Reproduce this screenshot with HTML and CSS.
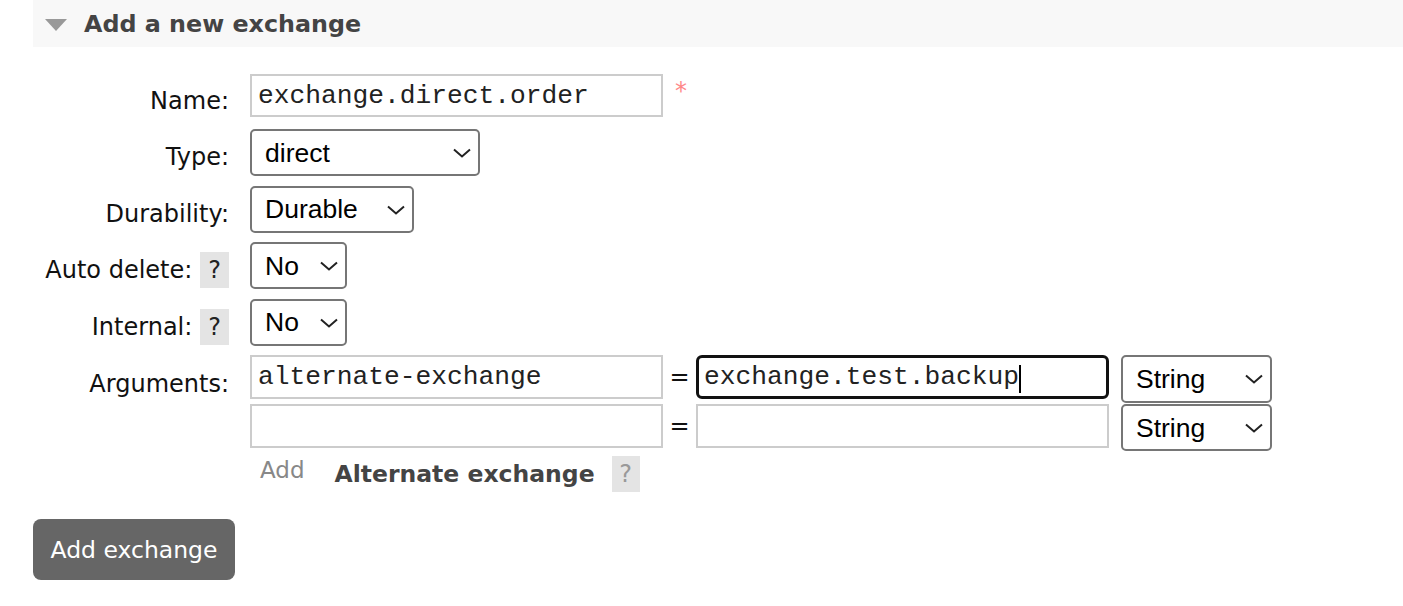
FILE: index.html
```html
<!DOCTYPE html>
<html>
<head>
<meta charset="utf-8">
<link rel="stylesheet" href="styles.css">
</head>
<body>
<div class="page">
  <h2 class="section-head"><span class="tri"></span>Add a new exchange</h2>
  <div class="form">
    <div class="row row-name">
      <div class="label">Name:</div>
      <div class="field">
        <input class="text" type="text" value="exchange.direct.order">
        <span class="mand">*</span>
      </div>
    </div>
    <div class="row">
      <div class="label">Type:</div>
      <div class="field">
        <span class="sel w-type"><select><option>direct</option></select><svg class="chev" viewBox="0 0 18 10"><path d="M1 1.5 L9 8.5 L17 1.5" fill="none" stroke="#222" stroke-width="2"/></svg></span>
      </div>
    </div>
    <div class="row">
      <div class="label">Durability:</div>
      <div class="field">
        <span class="sel w-dur"><select><option>Durable</option></select><svg class="chev" viewBox="0 0 18 10"><path d="M1 1.5 L9 8.5 L17 1.5" fill="none" stroke="#222" stroke-width="2"/></svg></span>
      </div>
    </div>
    <div class="row">
      <div class="label">Auto delete: <span class="help">?</span></div>
      <div class="field">
        <span class="sel w-no"><select><option>No</option></select><svg class="chev" viewBox="0 0 18 10"><path d="M1 1.5 L9 8.5 L17 1.5" fill="none" stroke="#222" stroke-width="2"/></svg></span>
      </div>
    </div>
    <div class="row">
      <div class="label">Internal: <span class="help">?</span></div>
      <div class="field">
        <span class="sel w-no"><select><option>No</option></select><svg class="chev" viewBox="0 0 18 10"><path d="M1 1.5 L9 8.5 L17 1.5" fill="none" stroke="#222" stroke-width="2"/></svg></span>
      </div>
    </div>
    <div class="row row-args">
      <div class="label">Arguments:</div>
      <div class="field args">
        <div class="arg">
          <input class="text" type="text" value="alternate-exchange">
          <span class="eq">=</span>
          <span class="focus-wrap"><input class="text focused" type="text" value="exchange.test.backup"><span class="caret"></span></span>
          <span class="sel w-str"><select><option>String</option></select><svg class="chev" viewBox="0 0 18 10"><path d="M1 1.5 L9 8.5 L17 1.5" fill="none" stroke="#222" stroke-width="2"/></svg></span>
        </div>
        <div class="arg">
          <input class="text" type="text" value="">
          <span class="eq">=</span>
          <input class="text" type="text" value="">
          <span class="sel w-str"><select><option>String</option></select><svg class="chev" viewBox="0 0 18 10"><path d="M1 1.5 L9 8.5 L17 1.5" fill="none" stroke="#222" stroke-width="2"/></svg></span>
        </div>
        <div class="add-row">
          <span class="add">Add</span>
          <span class="alt">Alternate exchange</span>
          <span class="help light">?</span>
        </div>
      </div>
    </div>
  </div>
  <button class="submit" type="button">Add exchange</button>
</div>
</body>
</html>
```

FILE: styles.css
```css
html, body {
  margin: 0;
  padding: 0;
  background: #fff;
}
body {
  font-family: "DejaVu Sans", Verdana, sans-serif;
  color: #111;
}
.page {
  padding-left: 33px;
}
.section-head {
  margin: 0;
  height: 47px;
  background: #f8f8f8;
  display: flex;
  align-items: center;
  font-size: 23.8px;
  font-weight: bold;
  color: #444;
  padding-left: 12px;
  box-sizing: border-box;
  padding-top: 1px;
}
.tri {
  width: 0;
  height: 0;
  border-left: 11px solid transparent;
  border-right: 11px solid transparent;
  border-top: 12px solid #999;
  margin-right: 17px;
  margin-top: 1px;
}
.form {
  display: flex;
  flex-direction: column;
  margin-top: 27px;
  gap: 9.5px;
}
.row-name {
  margin-bottom: 2.5px;
}
.row {
  display: flex;
  align-items: flex-start;
}
.label {
  width: 196px;
  flex: none;
  box-sizing: border-box;
  height: 46px;
  font-size: 24px;
  line-height: 30px;
  padding-top: 10px;
  display: flex;
  justify-content: flex-end;
  align-items: center;
  white-space: pre;
}
.row-name .label {
  height: 43px;
}
.row-args .label {
  padding-top: 12px;
}
.field {
  margin-left: 21px;
  display: flex;
  align-items: flex-start;
}
.text {
  box-sizing: border-box;
  width: 413px;
  height: 43px;
  border: 2px solid #ccc;
  border-radius: 0;
  padding: 0 6px;
  font-family: "Liberation Mono", "Courier New", monospace;
  font-size: 26.25px;
  color: #222;
  background: #fff;
  outline: none;
  margin: 0;
}
.args .text {
  height: 44px;
}
.mand {
  color: #f88;
  font-size: 24px;
  margin-left: 12px;
  line-height: 30px;
  margin-top: 2px;
}
.sel {
  position: relative;
  display: inline-block;
  flex: none;
}
.sel select {
  appearance: none;
  -webkit-appearance: none;
  box-sizing: border-box;
  height: 47px;
  width: 100%;
  border: 2px solid #767676;
  border-radius: 5px;
  background: #fff;
  font-family: "Liberation Sans", Arial, sans-serif;
  font-size: 26.5px;
  color: #000;
  padding: 0 0 0 13px;
  margin: 0;
  outline: none;
  display: block;
}
.chev {
  position: absolute;
  right: 9px;
  top: 19px;
  width: 18px;
  height: 10px;
  pointer-events: none;
}
.w-type { width: 230px; }
.w-dur { width: 164px; }
.w-no { width: 97px; }
.w-str { width: 151px; margin-left: 12px; }
.arg:first-child .w-str select { height: 48px; }
.help {
  display: inline-flex;
  align-items: center;
  justify-content: center;
  width: 29px;
  height: 36px;
  background: #e4e4e4;
  color: #222;
  font-size: 24px;
  line-height: 36px;
}
.args {
  flex-direction: column;
}
.arg {
  display: flex;
  align-items: flex-start;
}
.arg:first-child {
  margin-bottom: 1px;
}
.eq {
  width: 33px;
  text-align: center;
  font-size: 24px;
  line-height: 44px;
  color: #111;
}
.focus-wrap {
  position: relative;
  display: inline-block;
}
.text.focused {
  border: 3px solid #111;
  border-radius: 6px;
  padding-left: 5px;
}
.caret {
  position: absolute;
  left: 323px;
  top: 10px;
  width: 2px;
  height: 28px;
  background: #000;
}
.add-row {
  display: flex;
  align-items: center;
  height: 36px;
  margin-top: 5px;
}
.add {
  align-self: flex-start;
  color: #888;
  font-size: 23px;
  line-height: 28px;
  margin-left: 10px;
}
.alt {
  font-weight: bold;
  font-size: 23.5px;
  color: #444;
  margin-left: 30px;
  margin-right: 17px;
}
.help.light {
  color: #999;
  width: 28px;
}
.submit {
  margin-top: 27px;
  width: 202px;
  height: 61px;
  background: #666;
  color: #fff;
  border: none;
  border-radius: 8px;
  font-family: "DejaVu Sans", Verdana, sans-serif;
  font-size: 23.5px;
  padding: 0;
  display: block;
}
```
